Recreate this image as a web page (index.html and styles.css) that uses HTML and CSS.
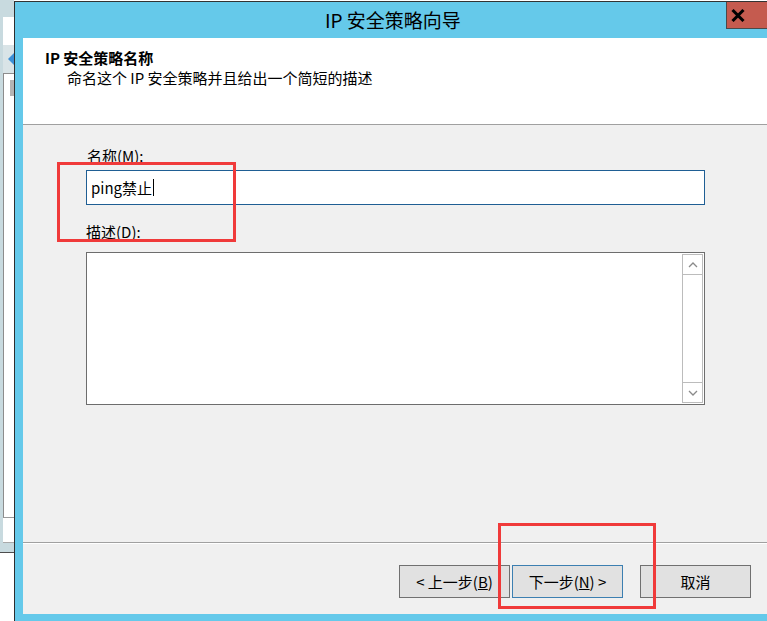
FILE: index.html
```html
<!DOCTYPE html>
<html lang="zh-CN">
<head>
<meta charset="utf-8">
<title>IP 安全策略向导</title>
<link rel="stylesheet" href="styles.css">
</head>
<body>
<div class="desk">
  <div class="bgwin">
    <div class="bg-top"></div>
    <div class="bg-white1"></div>
    <div class="bg-nav"><span class="bg-arrow"></span></div>
    <div class="bg-pane"><div class="bg-icon"></div></div>
    <div class="bg-status"></div>
  </div>

  <div class="dialog">
    <div class="titlebar">
      <span class="title">IP 安全策略向导</span>
      <div class="close">
        <svg class="close-x" width="14" height="13" viewBox="0 0 14 13"><line x1="1.5" y1="1" x2="12.5" y2="12" stroke="#000" stroke-width="3"/><line x1="12.5" y1="1" x2="1.5" y2="12" stroke="#000" stroke-width="3"/></svg>
      </div>
    </div>
    <div class="client">
      <div class="header">
        <div class="h-title">IP 安全策略名称</div>
        <div class="h-sub">命名这个 IP 安全策略并且给出一个简短的描述</div>
      </div>
      <div class="body">
        <div class="label">名称(M):</div>
        <div class="input">ping禁止<span class="caret"></span></div>
        <div class="label label-desc">描述(D):</div>
        <div class="textarea">
          <div class="ta-text"></div>
          <div class="sb">
            <div class="sb-btn sb-up">
              <svg width="10" height="6" viewBox="0 0 10 6"><polyline points="1,5 5,1 9,5" fill="none" stroke="#8a8a8a" stroke-width="1.3"/></svg>
            </div>
            <div class="sb-track"></div>
            <div class="sb-btn sb-down">
              <svg width="10" height="6" viewBox="0 0 10 6"><polyline points="1,1 5,5 9,1" fill="none" stroke="#8a8a8a" stroke-width="1.3"/></svg>
            </div>
          </div>
        </div>
      </div>
      <div class="footer">
        <div class="btn">&lt; 上一步(<u>B</u>)</div>
        <div class="btn btn-next">下一步(<u>N</u>) &gt;</div>
        <div class="btn btn-cancel">取消</div>
      </div>
    </div>
  </div>

  <div class="mark mark-name"></div>
  <div class="mark mark-next"></div>
</div>
</body>
</html>
```
FILE: styles.css
```css
html, body {
  margin: 0;
  padding: 0;
}
body {
  width: 767px;
  height: 621px;
  overflow: hidden;
  background: #ffffff;
  font-family: "Noto Sans CJK SC", "Noto Sans", sans-serif;
  color: #000;
}
.desk {
  position: relative;
  width: 767px;
  height: 621px;
  overflow: hidden;
}

/* background window sliver on the left */
.bgwin {
  position: absolute;
  left: 0;
  top: 0;
  width: 14px;
  height: 553px;
  box-sizing: border-box;
  background: #c8dadf;
  border-bottom: 1px solid #4d4d4d;
  padding-left: 3px;
  padding-bottom: 9px;
  display: flex;
  flex-direction: column;
}
.bg-top { height: 17px; }
.bg-white1 { height: 28px; background: #fff; }
.bg-nav {
  height: 28px;
  background: #d9e4e7;
  display: flex;
  align-items: center;
  padding-left: 5px;
}
.bg-arrow {
  width: 0;
  height: 0;
  border-top: 6px solid transparent;
  border-bottom: 6px solid transparent;
  border-right: 6px solid #3c8fd6;
}
.bg-pane {
  flex: 1;
  background: #fff;
  border-left: 1px solid #8c8c8c;
  border-top: 1px solid #8c8c8c;
  border-bottom: 1px solid #9a9a9a;
  padding: 6px 0 0 6px;
}
.bg-icon {
  width: 6px;
  height: 16px;
  background: #b4b4b4;
}
.bg-status {
  height: 24px;
  background: #fff;
  border-bottom: 1px solid #a9a9a9;
}

/* dialog */
.dialog {
  position: absolute;
  left: 14px;
  top: 1px;
  width: 765px;
  height: 620px;
  box-sizing: border-box;
  background: #65c9ea;
  border-left: 1px solid #2e2e2e;
  border-top: 1px solid #333;
  padding: 0 8px 7px 8px;
  display: flex;
  flex-direction: column;
}
.titlebar {
  height: 36px;
  display: flex;
  align-items: flex-start;
}
.title {
  flex: 1 1 auto;
  padding-left: 302px;
  font-size: 19px;
  line-height: 36px;
  color: #000;
}
.close {
  flex: 0 0 45px;
  height: 27px;
  box-sizing: border-box;
  background: #c55b4f;
  border-left: 1px solid #4a4a4a;
  border-bottom: 1px solid #4a4a4a;
  display: flex;
  align-items: center;
  padding-left: 4px;
}
.close-x {
  display: block;
  flex: none;
}
.client {
  flex: 1;
  background: #f0f0f0;
  display: flex;
  flex-direction: column;
  font-size: 15px;
}
.header {
  height: 76px;
  padding: 10px 0 0 22px;
  background: #fff;
  border-bottom: 1px solid #a0a0a0;
}
.h-title {
  font-weight: bold;
  line-height: 20px;
}
.h-sub {
  line-height: 20px;
  margin-left: 22px;
}
.body {
  flex: 1;
  padding: 21px 0 0 63px;
}
.label {
  line-height: 20px;
  margin-left: 1px;
}
.label-desc {
  margin-top: 17px;
  margin-left: 0;
}
.input {
  margin-top: 4px;
  width: 619px;
  height: 35px;
  box-sizing: border-box;
  border: 1px solid #1f5e94;
  background: #fff;
  padding-left: 4px;
  line-height: 31px;
  display: flex;
  align-items: center;
}
.caret {
  display: inline-block;
  width: 1px;
  height: 17px;
  background: #000;
  margin-left: 1px;
}
.textarea {
  margin-top: 10px;
  width: 619px;
  height: 153px;
  box-sizing: border-box;
  border: 1px solid #6d6d6d;
  background: #fff;
  display: flex;
  padding: 1px;
}
.ta-text { flex: 1; }
.sb {
  width: 21px;
  box-sizing: border-box;
  border: 1px solid #bcbcbc;
  display: flex;
  flex-direction: column;
}
.sb-btn {
  height: 19px;
  display: flex;
  align-items: center;
  justify-content: center;
}
.sb-up { border-bottom: 1px solid #bcbcbc; }
.sb-down { border-top: 1px solid #bcbcbc; }
.sb-track { flex: 1; }

.footer {
  height: 72px;
  box-sizing: border-box;
  border-top: 1px solid #a0a0a0;
  box-shadow: inset 0 1px 0 #ffffff;
  padding: 22px 0 0 376px;
  display: flex;
  align-items: flex-start;
}
.btn {
  width: 111px;
  height: 33px;
  box-sizing: border-box;
  border: 1px solid #707070;
  background: #e1e1e1;
  display: flex;
  align-items: center;
  justify-content: center;
  font-size: 15px;
  line-height: 20px;
}
.btn-next {
  margin-left: 2px;
  border-color: #3c7fb1;
}
.btn-cancel {
  margin-left: 17px;
}

/* red annotation frames */
.mark {
  position: absolute;
  box-sizing: border-box;
  border: 3px solid #f03a3a;
}
.mark-name {
  left: 57px;
  top: 162px;
  width: 179px;
  height: 80px;
}
.mark-next {
  left: 498px;
  top: 523px;
  width: 158px;
  height: 86px;
}
```
